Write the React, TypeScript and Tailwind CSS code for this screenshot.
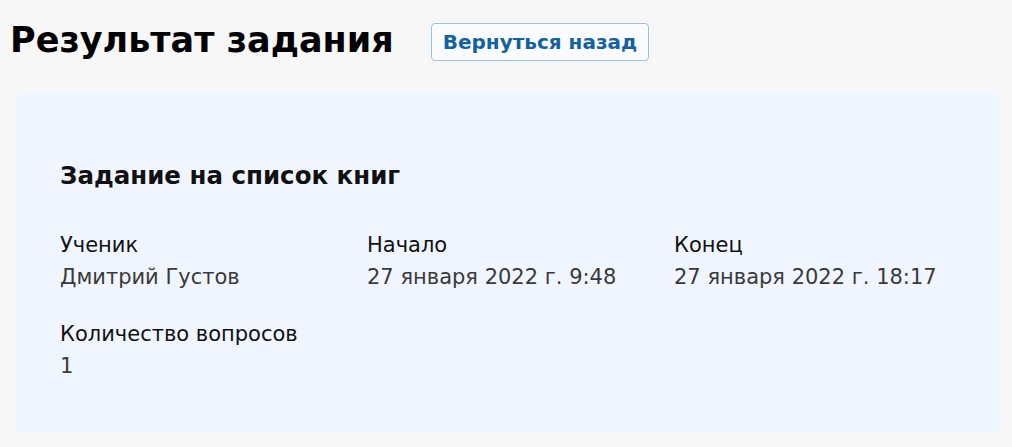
import React from "react";

function Field({ label, value }: { label: string; value: string }) {
  return (
    <div className="flex flex-col text-[21px] leading-[32px]">
      <span className="text-[#111]">{label}</span>
      <span className="text-[#3a3a3a]">{value}</span>
    </div>
  );
}

export default function App() {
  return (
    <div className="min-h-screen bg-[#f7f7f7] pl-[14px] pr-[11px] pt-[20px] pb-[14px] font-['DejaVu_Sans',sans-serif]">
      <div className="flex items-start gap-[37px]">
        <h1 className="-ml-[4px] whitespace-nowrap text-[35px] font-bold leading-[40px] text-black">
          Результат задания
        </h1>
        <button
          type="button"
          className="mt-[3px] h-[38px] rounded-[4px] border border-[#93c4ea] bg-[#fafcff] px-[11px] text-[20px] font-bold text-[#14619f]"
        >
          Вернуться назад
        </button>
      </div>

      <div className="mt-[31px] rounded-[10px] bg-[#eff6ff] px-[46px] pt-[68px] pb-[50px]">
        <h2 className="text-[24.5px] font-bold leading-[32px] text-[#111]">Задание на список книг</h2>
        <div className="mt-[37px] grid grid-cols-[307px_307px_307px] gap-y-[25px]">
          <Field label="Ученик" value="Дмитрий Густов" />
          <Field label="Начало" value="27 января 2022 г. 9:48" />
          <Field label="Конец" value="27 января 2022 г. 18:17" />
          <Field label="Количество вопросов" value="1" />
        </div>
      </div>
    </div>
  );
}
